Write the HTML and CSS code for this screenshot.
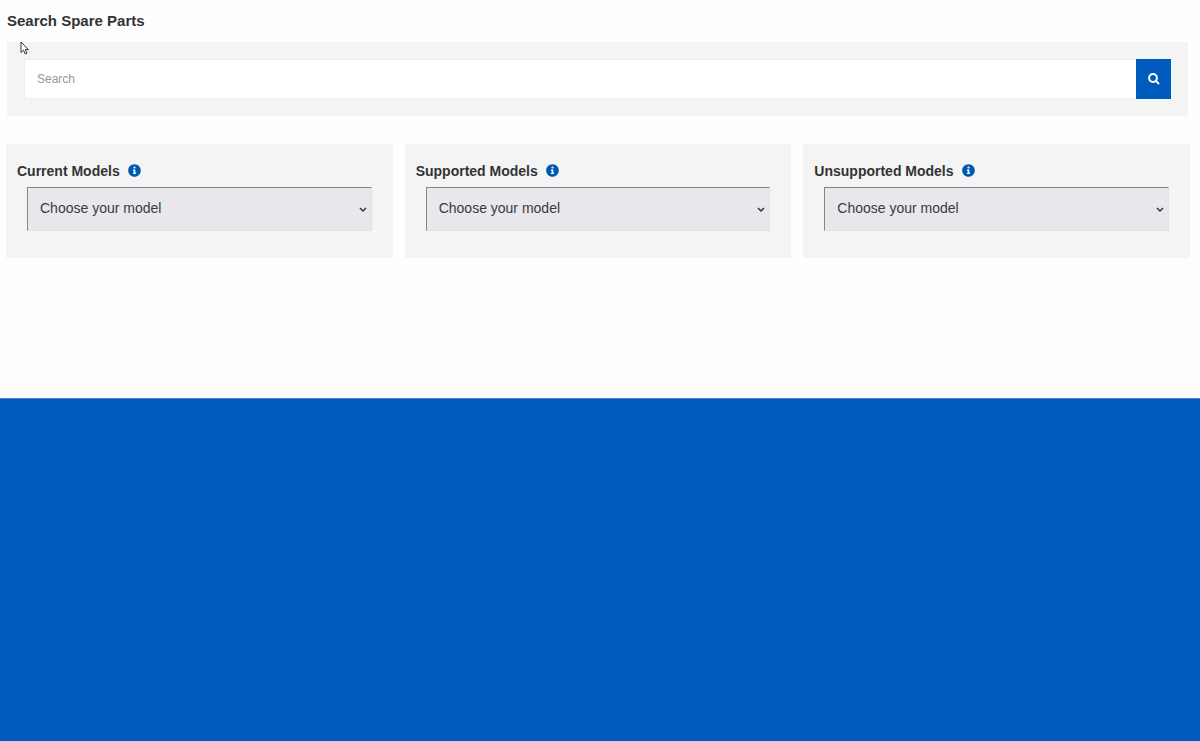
FILE: index.html
```html
<!DOCTYPE html>
<html lang="en">
<head>
<meta charset="utf-8">
<meta name="viewport" content="width=device-width, initial-scale=1">
<title>Search Spare Parts</title>
<link rel="stylesheet" href="styles.css">
</head>
<body>
<main class="content">
  <h1 class="title">Search Spare Parts</h1>
  <form class="search" role="search">
    <input class="search-input" type="text" placeholder="Search" aria-label="Search">
    <button class="search-button" type="button" aria-label="Search">
      <svg class="search-icon" viewBox="0 0 12 12" aria-hidden="true"><circle cx="5" cy="5" r="3.900"/><path d="M8 8l3 3"/></svg>
    </button>
  </form>
  <div class="models">
    <section class="card">
      <div class="card-head">
        <label class="card-label" for="current">Current Models</label>
        <button class="info" type="button" aria-label="About current models"><svg class="info-icon" viewBox="0 0 512 512" aria-hidden="true"><path fill="currentColor" d="M256 8C119 8 8 119 8 256s111 248 248 248 248-111 248-248S393 8 256 8zm0 90c23.200 0 42 18.800 42 42s-18.800 42-42 42-42-18.800-42-42 18.800-42 42-42zm64 280c0 6.600-5.400 12-12 12h-104c-6.600 0-12-5.400-12-12v-24c0-6.600 5.400-12 12-12h16v-80h-16c-6.600 0-12-5.400-12-12v-24c0-6.600 5.400-12 12-12h76c6.600 0 12 5.400 12 12v116h16c6.600 0 12 5.400 12 12v24z"/></svg></button>
      </div>
      <div class="select-wrap">
        <select class="select" id="current"><option>Choose your model</option></select>
        <svg class="chevron" viewBox="0 0 8 6" aria-hidden="true"><path d="M1 1l3 3 3-3"/></svg>
      </div>
    </section>
    <section class="card">
      <div class="card-head">
        <label class="card-label" for="supported">Supported Models</label>
        <button class="info" type="button" aria-label="About supported models"><svg class="info-icon" viewBox="0 0 512 512" aria-hidden="true"><path fill="currentColor" d="M256 8C119 8 8 119 8 256s111 248 248 248 248-111 248-248S393 8 256 8zm0 90c23.200 0 42 18.800 42 42s-18.800 42-42 42-42-18.800-42-42 18.800-42 42-42zm64 280c0 6.600-5.400 12-12 12h-104c-6.600 0-12-5.400-12-12v-24c0-6.600 5.400-12 12-12h16v-80h-16c-6.600 0-12-5.400-12-12v-24c0-6.600 5.400-12 12-12h76c6.600 0 12 5.400 12 12v116h16c6.600 0 12 5.400 12 12v24z"/></svg></button>
      </div>
      <div class="select-wrap">
        <select class="select" id="supported"><option>Choose your model</option></select>
        <svg class="chevron" viewBox="0 0 8 6" aria-hidden="true"><path d="M1 1l3 3 3-3"/></svg>
      </div>
    </section>
    <section class="card">
      <div class="card-head">
        <label class="card-label" for="unsupported">Unsupported Models</label>
        <button class="info" type="button" aria-label="About unsupported models"><svg class="info-icon" viewBox="0 0 512 512" aria-hidden="true"><path fill="currentColor" d="M256 8C119 8 8 119 8 256s111 248 248 248 248-111 248-248S393 8 256 8zm0 90c23.200 0 42 18.800 42 42s-18.800 42-42 42-42-18.800-42-42 18.800-42 42-42zm64 280c0 6.600-5.400 12-12 12h-104c-6.600 0-12-5.400-12-12v-24c0-6.600 5.400-12 12-12h16v-80h-16c-6.600 0-12-5.400-12-12v-24c0-6.600 5.400-12 12-12h76c6.600 0 12 5.400 12 12v116h16c6.600 0 12 5.400 12 12v24z"/></svg></button>
      </div>
      <div class="select-wrap">
        <select class="select" id="unsupported"><option>Choose your model</option></select>
        <svg class="chevron" viewBox="0 0 8 6" aria-hidden="true"><path d="M1 1l3 3 3-3"/></svg>
      </div>
    </section>
  </div>
</main>
<footer class="footer"></footer>
<svg class="cursor" viewBox="0 0 9 14" aria-hidden="true"><path d="M1 1v10.500l2.500-2.300 1.700 3.800 1.800-.8-1.700-3.600H8.300z"/></svg>
</body>
</html>
```
FILE: styles.css
```css
* {
  box-sizing: border-box;
}

body {
  display: flex;
  flex-direction: column;
  min-height: 100vh;
  margin: 0;
  background: #fefefe;
  color: #333;
  font-family: "Liberation Sans", Arial, sans-serif;
  font-size: 14px;
}

.content {
  padding: 10px 10px 140px 6px;
}

.title {
  margin: 0 0 10px 1px;
  font-size: 15px;
  line-height: 22px;
}

.search {
  display: flex;
  margin: 0 2px 28px 1px;
  padding: 17px;
  background: #f4f4f4;
}

.search-input {
  flex: 1;
  min-width: 0;
  height: 40px;
  padding: 0 12px;
  border: 1px solid #eee;
  border-right: 0;
  background: #fff;
  color: #333;
  font: inherit;
  font-size: 12px;
}

.search-input::placeholder {
  color: #999;
}

.search-button {
  display: grid;
  place-items: center;
  width: 35px;
  height: 40px;
  padding: 0;
  border: 0;
  background: #005bbf;
  color: #fff;
}

.search-icon {
  width: 12px;
  height: 12px;
  fill: none;
  stroke: currentColor;
  stroke-width: 2;
}

.models {
  display: grid;
  grid-template-columns: repeat(3, 1fr);
  gap: 12px;
}

.card {
  padding: 16px 21px 27px 11px;
  background: #f4f4f4;
}

.card-head {
  display: flex;
  align-items: flex-start;
  gap: 8px;
}

.card-label {
  padding-top: 1px;
  font-weight: bold;
  line-height: 20px;
}

.info {
  display: grid;
  place-items: center;
  height: 20px;
  padding: 0;
  border: 0;
  background: none;
  color: #0058b5;
}

.info-icon {
  width: 13px;
  height: 13px;
}

.select-wrap {
  position: relative;
  margin: 6px 0 0 10px;
}

.select {
  display: block;
  width: 100%;
  height: 44px;
  padding: 0 24px 2px 12px;
  border: 1px solid #e2e2e5;
  border-top-color: #858587;
  border-left-color: #858587;
  border-radius: 0;
  appearance: none;
  background: #e8e7ec;
  color: #3b3b3b;
  font: inherit;
}

.chevron {
  position: absolute;
  top: 20px;
  right: 5px;
  width: 8px;
  height: 6px;
  fill: none;
  stroke: #333;
  stroke-width: 1.5;
  pointer-events: none;
}

.footer {
  flex: 1;
  border-top: 1px solid #4f87c4;
  background: #005bbf;
}

.cursor {
  position: absolute;
  top: 41px;
  left: 20px;
  width: 9px;
  height: 14px;
  fill: #fff;
  stroke: #333;
  pointer-events: none;
}
```
